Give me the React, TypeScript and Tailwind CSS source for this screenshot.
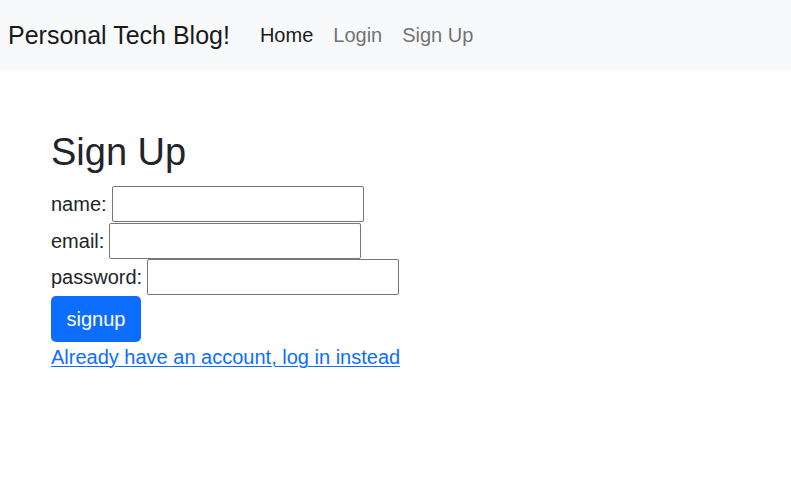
export default function App() {
  const font = { fontFamily: '"Liberation Sans", Arial, sans-serif' };
  return (
    <div className="min-h-[491px] w-full bg-white text-[#212529]" style={font}>
      <nav className="flex h-[70px] items-center bg-[#f8f9fa] pl-[8px]">
        <a className="mr-[20px] text-[25px] leading-[37px] text-[#1a1a1a]">Personal Tech Blog!</a>
        <div className="flex items-center text-[20px] leading-[30px]">
          <a className="px-[10px] text-[#1a1a1a]">Home</a>
          <a className="px-[10px] text-[#737373]">Login</a>
          <a className="px-[10px] text-[#737373]">Sign Up</a>
        </div>
      </nav>
      <div className="pl-[51px] pt-[59px] text-[20px] leading-[30px]">
        <h1 className="mb-[10px] text-[38px] leading-[47px] font-normal">Sign Up</h1>
        <form className="flex flex-col items-start">
          <div className="flex h-[36.5px] items-center gap-[5px]">
            <label>name:</label>
            <input className="h-[36px] w-[252px] rounded-[2px] border border-[#767676] bg-white" />
          </div>
          <div className="flex h-[36.5px] items-center gap-[5px]">
            <label>email:</label>
            <input className="h-[36px] w-[252px] rounded-[2px] border border-[#767676] bg-white" />
          </div>
          <div className="flex h-[36.5px] items-center gap-[5px]">
            <label>password:</label>
            <input className="h-[36px] w-[252px] rounded-[2px] border border-[#767676] bg-white" />
          </div>
          <button type="button" className="h-[46px] w-[90px] rounded-[5px] bg-[#0d6efd] text-[20px] leading-[30px] text-white">
            signup
          </button>
          <a className="text-[#0d6efd] underline decoration-1 underline-offset-[2px]">Already have an account, log in instead</a>
        </form>
      </div>
    </div>
  );
}
